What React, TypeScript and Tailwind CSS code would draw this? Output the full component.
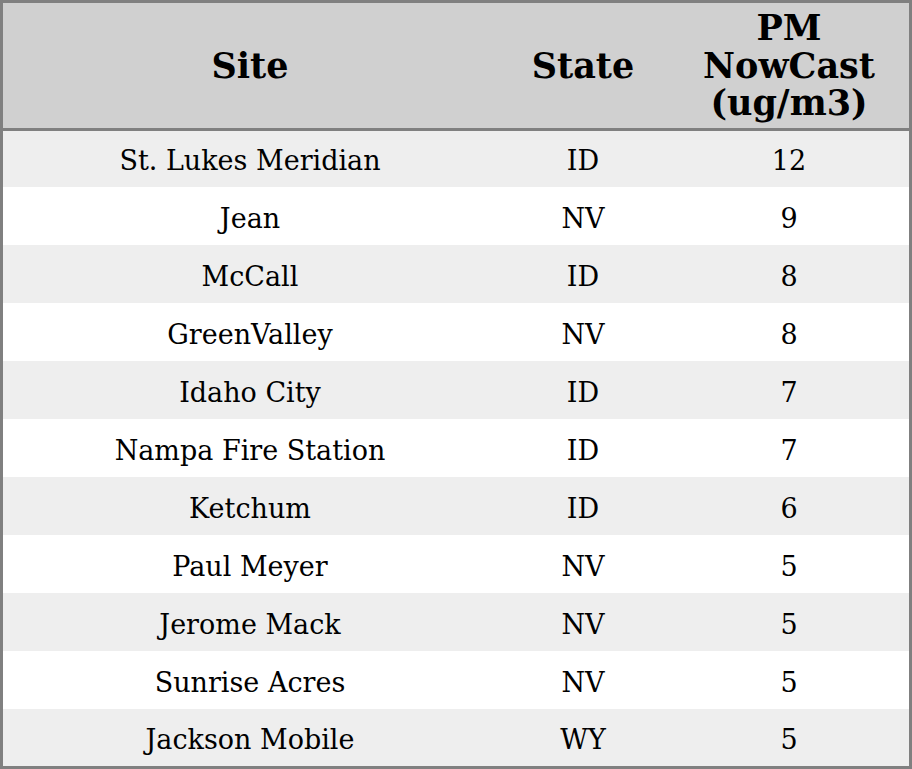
const rows: [string, string, string][] = [
  ["St. Lukes Meridian", "ID", "12"],
  ["Jean", "NV", "9"],
  ["McCall", "ID", "8"],
  ["GreenValley", "NV", "8"],
  ["Idaho City", "ID", "7"],
  ["Nampa Fire Station", "ID", "7"],
  ["Ketchum", "ID", "6"],
  ["Paul Meyer", "NV", "5"],
  ["Jerome Mack", "NV", "5"],
  ["Sunrise Acres", "NV", "5"],
  ["Jackson Mobile", "WY", "5"],
];

export default function App() {
  return (
    <div
      className="h-[769px] w-[912px] border-[3px] border-[#808080] bg-white text-black"
      style={{ fontFamily: '"DejaVu Serif", serif' }}
    >
      <div className="grid h-[128px] grid-cols-[494px_172px_240px] items-center border-b-[3px] border-[#808080] bg-[#d0d0d0] text-center text-[35px] font-bold leading-[37.5px]">
        <div>Site</div>
        <div>State</div>
        <div>
          PM
          <br />
          NowCast
          <br />
          (ug/m3)
        </div>
      </div>
      <div className="flex flex-col">
        {rows.map(([site, state, value], i) => (
          <div
            key={site}
            className={`grid grid-cols-[494px_172px_240px] items-center text-center text-[27px] ${
              i === 0
                ? "h-[56px] pt-[5px]"
                : i === rows.length - 1
                  ? "h-[57px] pt-[6px]"
                  : "h-[58px] pt-[7px]"
            } ${i % 2 === 0 ? "bg-[#eeeeee]" : "bg-white"}`}
          >
            <div>{site}</div>
            <div>{state}</div>
            <div>{value}</div>
          </div>
        ))}
      </div>
    </div>
  );
}
